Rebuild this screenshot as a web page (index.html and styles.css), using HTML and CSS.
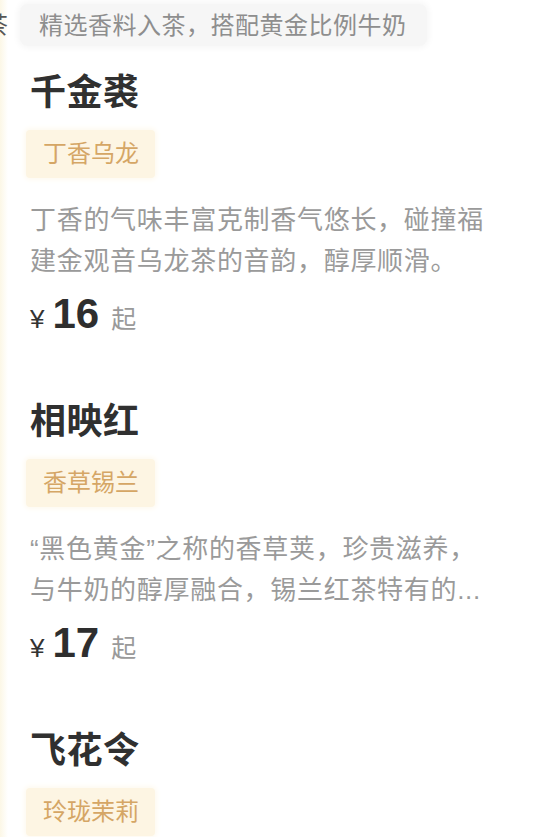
FILE: index.html
```html
<!DOCTYPE html>
<html lang="zh-CN">
<head>
<meta charset="utf-8">
<link rel="stylesheet" href="styles.css">
</head>
<body>
<div class="page">
  <aside class="side"><span class="side-text">奶茶</span></aside>
  <main class="content">
    <div class="intro">精选香料入茶，搭配黄金比例牛奶</div>

    <section class="item">
      <h2 class="name">千金裘</h2>
      <span class="tag">丁香乌龙</span>
      <p class="desc">丁香的气味丰富克制香气悠长，碰撞福建金观音乌龙茶的音韵，醇厚顺滑。</p>
      <div class="price"><span class="yen">¥</span><span class="num">16</span><span class="from">起</span></div>
    </section>

    <section class="item">
      <h2 class="name">相映红</h2>
      <span class="tag">香草锡兰</span>
      <p class="desc">“黑色黄金”之称的香草荚，珍贵滋养，与牛奶的醇厚融合，锡兰红茶特有的...</p>
      <div class="price"><span class="yen">¥</span><span class="num">17</span><span class="from">起</span></div>
    </section>

    <section class="item">
      <h2 class="name">飞花令</h2>
      <span class="tag">玲珑茉莉</span>
    </section>
  </main>
</div>
</body>
</html>
```

FILE: styles.css
```css
* { box-sizing: border-box; }
html, body {
  margin: 0;
  padding: 0;
  background: #ffffff;
}
body {
  font-family: "Liberation Sans", "Noto Sans CJK SC", sans-serif;
  color: #333333;
  width: 535px;
  height: 837px;
  overflow: hidden;
}
.page {
  display: flex;
  align-items: stretch;
  min-height: 837px;
}
.side {
  width: 8px;
  flex: none;
  overflow: hidden;
  background: linear-gradient(to right, #fcf7e6, #ffffff);
  padding-top: 11px;
}
.side-text {
  display: block;
  white-space: nowrap;
  font-size: 24px;
  line-height: 30px;
  color: #555555;
  margin-left: -40px;
}
.content {
  flex: 1;
  padding: 4px 40px 0 22px;
}
.intro {
  display: inline-block;
  margin-left: -10px;
  height: 42px;
  line-height: 44px;
  padding: 0 20px 0 19px;
  border-radius: 8px;
  background: #f6f6f6;
  color: #8e8e8e;
  font-size: 24px;
  letter-spacing: 0.5px;
  white-space: nowrap;
  box-shadow: 0 0 6px 2px #f6f6f6;
}
.item {
  display: flex;
  flex-direction: column;
  align-items: flex-start;
  margin-top: 23px;
}
.item + .item {
  margin-top: 60px;
}
.name {
  margin: 0;
  font-size: 36px;
  line-height: 48px;
  font-weight: 700;
  color: #303030;
  letter-spacing: 0.5px;
}
.tag {
  margin-top: 13px;
  margin-left: -4px;
  height: 48px;
  line-height: 48px;
  padding: 0 16px 0 17px;
  background: #fdf5e3;
  color: #d5a665;
  font-size: 24px;
  border-radius: 4px;
  box-shadow: 0 0 5px 2px #fefaf0;
}
.desc {
  margin: 22px 0 0;
  font-size: 26px;
  line-height: 41px;
  color: #9a9a9a;
  letter-spacing: 0.7px;
}
.price {
  margin-top: 8px;
  display: flex;
  align-items: baseline;
  height: 48px;
}
.yen {
  font-size: 26px;
  line-height: 48px;
  color: #333333;
}
.num {
  margin-left: 8px;
  font-size: 42px;
  line-height: 48px;
  font-weight: 700;
  color: #2e2e2e;
}
.from {
  margin-left: 12px;
  font-size: 25px;
  line-height: 48px;
  color: #9a9a9a;
}
```
